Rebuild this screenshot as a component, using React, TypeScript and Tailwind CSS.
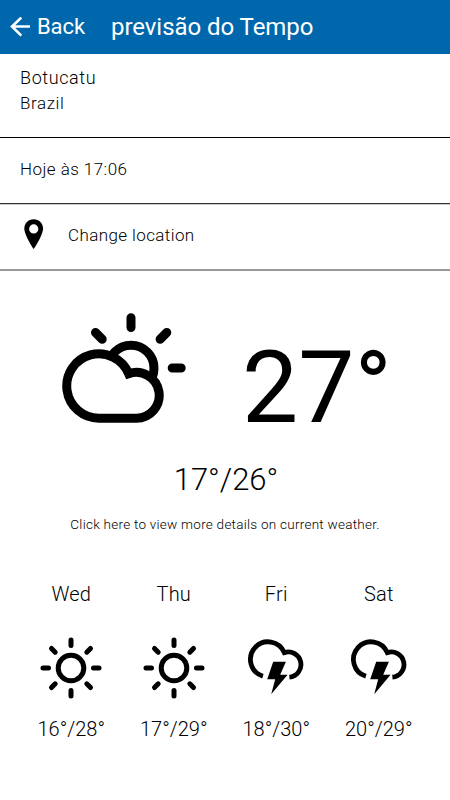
import type { ReactNode } from 'react';

type Condition = 'sunny' | 'storm';

interface DayForecast {
  day: string;
  condition: Condition;
  range: string;
}

const forecast: DayForecast[] = [
  { day: 'Wed', condition: 'sunny', range: '16°/28°' },
  { day: 'Thu', condition: 'sunny', range: '17°/29°' },
  { day: 'Fri', condition: 'storm', range: '18°/30°' },
  { day: 'Sat', condition: 'storm', range: '20°/29°' },
];

function BackIcon() {
  return (
    <svg className="h-5 w-5" viewBox="0 0 20 20" fill="none" stroke="currentColor" strokeWidth="2.6">
      <path d="M20 9.500H2M11.300 .6L2 9.500L11.300 18.700" />
    </svg>
  );
}

function PinIcon() {
  return (
    <svg className="h-[31px] w-5" viewBox="0.3 0 20 31" fill="currentColor">
      <path
        fillRule="evenodd"
        d="M10 .3C4.600.3.6 4.400.6 9.600C.6 16.200 10 30.300 10 30.300S19.400 16.200 19.400 9.600C19.400 4.400 15.400.3 10 .3ZM10 5.300A4.600 4.600 0 1 1 10 14.500A4.600 4.600 0 1 1 10 5.300Z"
      />
    </svg>
  );
}

function PartlyCloudyIcon() {
  return (
    <svg className="h-[110px] w-[125px]" viewBox="62 313 125 110" fill="none" stroke="currentColor" strokeWidth="9">
      <circle cx="131" cy="368.200" r="23" />
      <path
        fill="#fff"
        d="M99.300 418.200A32.200 32.200 0 1 1 128.700 373.700A22.900 22.900 0 1 1 136 418.200Z"
      />
      <path
        strokeLinecap="round"
        d="M131 317.800V327.500M172.200 368H181.200M95.500 332.500L102.200 339.200M166.800 332.500L160.100 339.200"
      />
    </svg>
  );
}

function SunIcon() {
  return (
    <svg className="h-16 w-16" viewBox="-32 -32 64 64" fill="none" stroke="currentColor" strokeWidth="5">
      <circle r="12.800" />
      <path
        strokeLinecap="round"
        d="M0 -28V-22.500M0 22.500V28M-28 0H-22.500M22.500 0H28M-19.500 -19.500L-15.800 -15.800M15.800 15.800L19.500 19.500M19.500 -19.500L15.800 -15.800M-15.800 15.800L-19.500 19.500"
      />
    </svg>
  );
}

function StormIcon() {
  return (
    <svg className="h-16 w-16" viewBox="244.100 636 64 64" fill="none" stroke="currentColor" strokeWidth="4.800">
      <path d="M263 676.200A17.600 17.600 0 1 1 284.400 652.600A12.650 12.650 0 1 1 289.500 677.200" />
      <path
        fill="currentColor"
        stroke="none"
        d="M273.300 661.700H286L280.300 674.700H287.700L271.300 694.300L275.300 679.300H267.300Z"
      />
    </svg>
  );
}

const icons: Record<Condition, ReactNode> = {
  sunny: <SunIcon />,
  storm: <StormIcon />,
};

export default function App() {
  return (
    <div className="flex h-[800px] w-[450px] flex-col overflow-hidden bg-white font-[Roboto,sans-serif] text-black">
      <header className="flex h-[54px] shrink-0 items-center bg-[#0067ac] pl-2.5 text-white">
        <button className="flex items-center gap-[7px]">
          <BackIcon />
          <span className="text-[22px] leading-[54px] tracking-[-0.1px]">Back</span>
        </button>
        <h1 className="ml-[26px] text-2xl leading-[54px] tracking-[-0.05px]">previsão do Tempo</h1>
      </header>

      <section className="h-[84px] shrink-0 border-b border-black px-5 pt-[11px] font-light">
        <p className="text-lg leading-[26px] tracking-[0.6px]">Botucatu</p>
        <p className="text-[17px] leading-[25px] tracking-[0.6px]">Brazil</p>
      </section>
      <section className="flex h-[66px] shrink-0 items-center border-b border-[#333] px-5 pb-0.5 text-[17px] font-light tracking-[0.45px]">
        <p>Hoje às 17:06</p>
      </section>
      <button className="flex h-[67px] shrink-0 items-center gap-6 border-t border-b-2 border-t-[#ccc] border-b-[#999] pl-6 pb-[5px] text-[17px] font-light tracking-[0.4px]">
        <PinIcon />
        <span className="pt-[3px]">Change location</span>
      </button>

      <main className="flex flex-col font-light">
        <div className="flex h-[152px] items-end pl-[62px]">
          <PartlyCloudyIcon />
          <span className="relative top-[5px] ml-[55px] text-[100px] font-normal leading-[80px]">27°</span>
        </div>
        <p className="mt-[37px] pl-0.5 text-center text-[31px] leading-10">17°/26°</p>
        <p className="mt-3.5 text-center text-[13.5px] leading-5 tracking-[0.26px]">
          Click here to view more details on current weather.
        </p>

        <div className="mt-[46px] grid grid-cols-4 px-5">
          {forecast.map(({ day, condition, range }) => (
            <div key={day} className="flex flex-col items-center">
              <p className="text-xl leading-7 tracking-[0.2px]">{day}</p>
              <div className="mt-7 mb-[15px]">{icons[condition]}</div>
              <p className="text-xl leading-7">{range}</p>
            </div>
          ))}
        </div>
      </main>
    </div>
  );
}
